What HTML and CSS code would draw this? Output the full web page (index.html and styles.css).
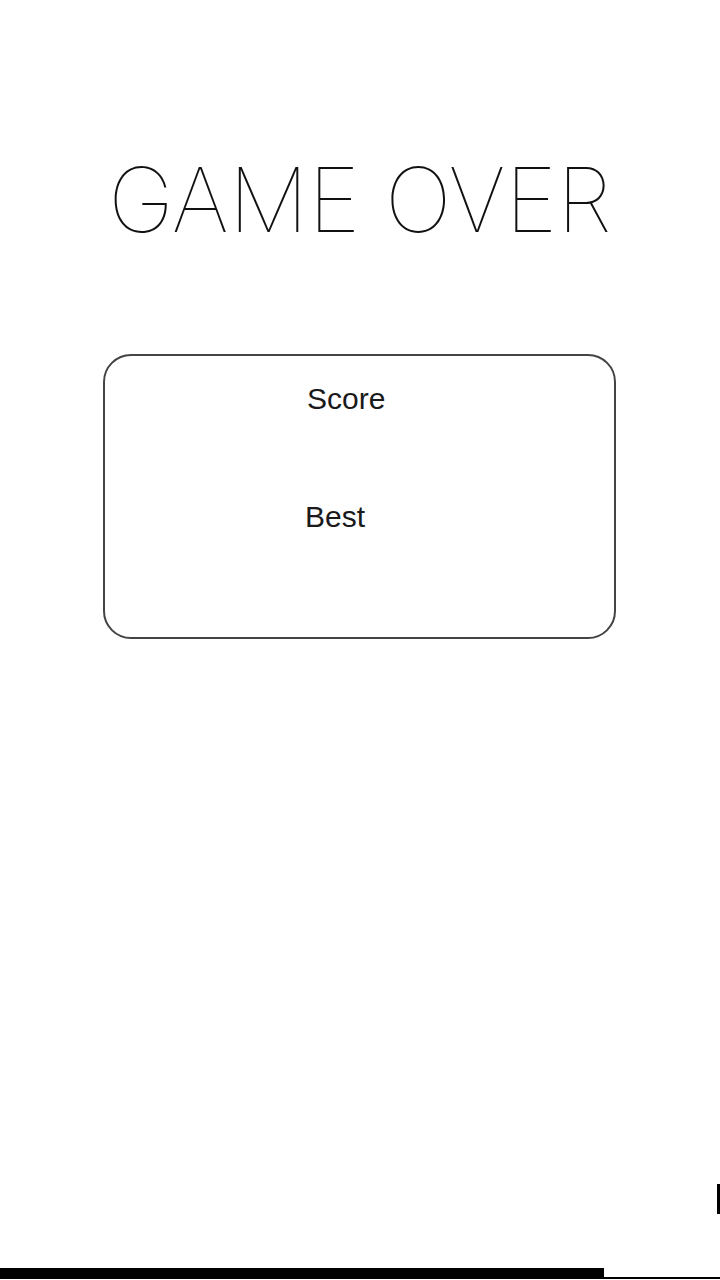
FILE: index.html
```html
<!DOCTYPE html>
<html lang="en">
<head>
<meta charset="utf-8">
<title>Game Over</title>
<link rel="stylesheet" href="styles.css">
</head>
<body>
<main class="screen">
  <h1 class="title">GAME OVER</h1>
  <section class="card">
    <div class="stat stat-score">Score</div>
    <div class="stat stat-best">Best</div>
  </section>
  <div class="spacer"></div>
  <div class="edge-mark"></div>
  <div class="progress"><div class="progress-fill"></div></div>
  <div class="baseline"></div>
</main>
</body>
</html>
```
FILE: styles.css
```css
html, body {
  margin: 0;
  padding: 0;
  background: #fff;
}
.screen {
  width: 720px;
  height: 1280px;
  display: flex;
  flex-direction: column;
  overflow: hidden;
}
.title {
  margin: 155px 0 0;
  text-align: center;
  font-family: Inter, "Liberation Sans", sans-serif;
  font-weight: 100;
  font-size: 89px;
  line-height: 89px;
  color: #111;
  letter-spacing: -0.1px;
}
.card {
  margin: 110px 0 0 103px;
  width: 513px;
  height: 285px;
  box-sizing: border-box;
  border: 2px solid #444;
  border-radius: 28px;
  padding: 28px 0 0 200px;
  display: flex;
  flex-direction: column;
  gap: 88px;
}
.stat {
  font-family: "Liberation Sans", Arial, sans-serif;
  font-size: 30px;
  line-height: 30px;
  color: #1a1a1a;
}
.stat-score {
  padding-left: 2px;
}
.spacer {
  flex: 1;
}
.edge-mark {
  align-self: flex-end;
  width: 3px;
  height: 30px;
  background: #000;
  margin-bottom: 54px;
}
.progress {
  height: 9px;
  display: flex;
}
.progress-fill {
  width: 604px;
  background: #000;
}
.baseline {
  height: 2px;
  background: #000;
  margin-bottom: 1px;
}
```
